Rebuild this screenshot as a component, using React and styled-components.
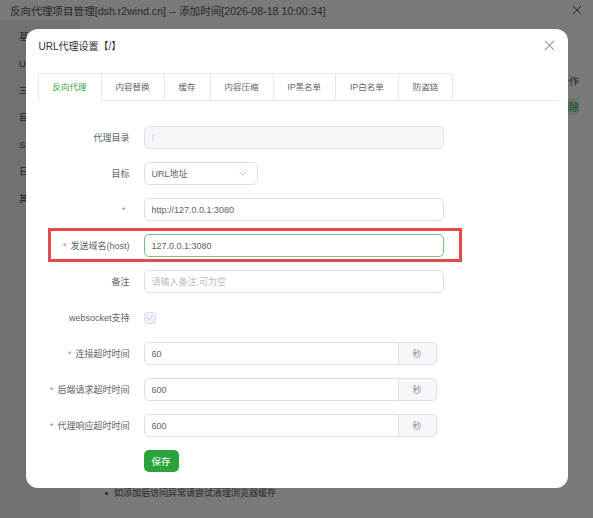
import React from "react";
import styled, { createGlobalStyle } from "styled-components";

const GlobalStyle = createGlobalStyle`
  html, body {
    margin: 0;
    padding: 0;
  }
  body {
    font-family: "Liberation Sans", "Noto Sans CJK SC", sans-serif;
    background: #fff;
  }
  * {
    box-sizing: border-box;
  }
`;

// ---- page behind the dialog ----

const Page = styled.div`
  position: relative;
  width: 593px;
  height: 518px;
  overflow: hidden;
  background: #fff;
  display: flex;
  flex-direction: column;
`;

const PageHeader = styled.div`
  display: flex;
  align-items: center;
  justify-content: space-between;
  height: 20px;
  padding: 0 11px 0 10px;
  font-size: 10.6px;
  color: #555;
`;

const PageBody = styled.div`
  flex: 1;
  display: grid;
  grid-template-columns: 80px 1fr;
`;

const SideNav = styled.div`
  background: #ececec;
  padding-top: 3px;
`;

const NavItem = styled.div`
  height: 27px;
  line-height: 27px;
  padding-left: 19px;
  font-size: 9.5px;
  color: #444;
  white-space: nowrap;
`;

const Content = styled.div`
  display: flex;
  flex-direction: column;
  padding: 48px 0 0 20px;
`;

const TableRow = styled.div`
  display: grid;
  grid-template-columns: 1fr 34px;
  align-items: center;
  height: ${(p) => p.height || "24px"};
  font-size: 10px;
  color: #555;
`;

const DangerLink = styled.span`
  justify-self: start;
  padding: 1px 0;
  border-radius: 3px;
  background: #dff3e2;
  color: #2ba33c;
  white-space: nowrap;
`;

const Tip = styled.div`
  margin-top: auto;
  display: flex;
  align-items: center;
  gap: 6px;
  padding: 0 0 18px 5px;
  line-height: 14px;
  font-size: 9px;
  color: #555;
`;

const Dot = styled.span`
  width: 3px;
  height: 3px;
  border-radius: 50%;
  background: #555;
`;

// ---- dialog ----

const Mask = styled.div`
  position: absolute;
  inset: 0;
  background: rgba(0, 0, 0, 0.52);
  display: flex;
  justify-content: center;
  align-items: flex-start;
  padding-top: 29px;
`;

const Modal = styled.div`
  width: 542px;
  background: #fff;
  border-radius: 12px;
`;

const ModalHeader = styled.div`
  display: flex;
  align-items: center;
  justify-content: space-between;
  height: 32px;
  padding: 0 13px;
  font-size: 10px;
  color: #303133;
`;

const ModalBody = styled.div`
  padding: 12px 10px 16px 12px;
`;

const TabList = styled.div`
  display: flex;
  border-bottom: 1px solid #e4e7ed;
`;

const TabGroup = styled.div`
  display: flex;
  border: 1px solid #e4e7ed;
  border-bottom: none;
  border-radius: 4px 4px 0 0;
  margin-bottom: -1px;
`;

const Tab = styled.div`
  height: 27px;
  line-height: 26px;
  padding: 0 14px;
  font-size: 8.5px;
  white-space: nowrap;
  color: ${(p) => (p.active ? "#2ba33c" : "#606266")};
  border-left: ${(p) => (p.first ? "none" : "1px solid #e4e7ed")};
  border-bottom: 1px solid ${(p) => (p.active ? "#fff" : "#e4e7ed")};
`;

const Form = styled.div`
  margin-top: 25px;
`;

const Row = styled.div`
  position: relative;
  display: flex;
  align-items: center;
  height: 23px;
  margin-bottom: 13px;
`;

const Highlight = styled.div`
  position: absolute;
  left: 10px;
  right: 96px;
  top: -6px;
  bottom: -5px;
  border: 3px solid #e5484d;
  pointer-events: none;
`;

const Label = styled.label`
  width: 106px;
  padding-right: 14px;
  text-align: right;
  font-size: 9px;
  color: #606266;
  white-space: nowrap;
`;

const Star = styled.span`
  color: #f56c6c;
  margin-right: 4px;
`;

const Input = styled.input`
  width: ${(p) => p.width || "300px"};
  height: 23px;
  padding: 0 7px;
  border: 1px solid ${(p) => (p.focused ? "#72c27f" : "#dcdfe6")};
  border-radius: ${(p) => (p.grouped ? "5px 0 0 5px" : "5px")};
  background: ${(p) => (p.disabled ? "#f5f7fa" : "#fff")};
  font-family: inherit;
  font-size: 9px;
  color: ${(p) => (p.disabled ? "#c0c4cc" : "#606266")};
  outline: none;

  &::placeholder {
    color: #b8bcc4;
  }
`;

const Select = styled.div`
  width: 114px;
  height: 23px;
  display: flex;
  align-items: center;
  justify-content: space-between;
  padding: 0 10px 0 7px;
  border: 1px solid #dcdfe6;
  border-radius: 5px;
  font-size: 9px;
  color: #606266;
`;

const InputGroup = styled.div`
  display: flex;
  width: 293px;
`;

const Append = styled.div`
  width: 38px;
  height: 23px;
  display: flex;
  align-items: center;
  justify-content: center;
  background: #f5f7fa;
  border: 1px solid #dcdfe6;
  border-left: none;
  border-radius: 0 5px 5px 0;
  font-size: 9px;
  color: #909399;
`;

const Checkbox = styled.span`
  width: 12px;
  height: 12px;
  display: flex;
  align-items: center;
  justify-content: center;
  border: 1px solid #dcdfe6;
  border-radius: 3px;
  background: #edf2fc;
`;

const SaveButton = styled.button`
  margin-left: 106px;
  width: 35px;
  height: 22px;
  border: none;
  border-radius: 5px;
  background: #2ba33c;
  color: #fff;
  font-family: inherit;
  font-size: 9.5px;
  padding: 0;
`;

const CloseIcon = ({ size = 11, color = "#909399" }) => (
  <svg width={size} height={size} viewBox="0 0 12 12">
    <path d="M1 1L11 11M11 1L1 11" stroke={color} strokeWidth="1.1" fill="none" />
  </svg>
);

const Chevron = () => (
  <svg width="8" height="5" viewBox="0 0 8 5">
    <path d="M0.5 0.5L4 4L7.5 0.5" stroke="#c0c4cc" strokeWidth="0.9" fill="none" />
  </svg>
);

const Check = () => (
  <svg width="8" height="7" viewBox="0 0 8 7">
    <path d="M1 3.6L3.1 5.6L7 1.2" stroke="#c0c4cc" strokeWidth="1" fill="none" />
  </svg>
);

const tabs = ["反向代理", "内容替换", "缓存", "内容压缩", "IP黑名单", "IP白名单", "防盗链"];
const navItems = ["基本", "URL", "三级", "目录", "SSL", "日志", "其他"];

const timeouts = [
  { label: "连接超时时间", value: "60" },
  { label: "后端请求超时时间", value: "600" },
  { label: "代理响应超时时间", value: "600" },
];

export default function App() {
  return (
    <>
      <GlobalStyle />
      <Page>
        <PageHeader>
          <span>反向代理项目管理[dsh.r2wind.cn] -- 添加时间[2026-08-18 10:00:34]</span>
          <CloseIcon size={10} color="#444" />
        </PageHeader>
        <PageBody>
          <SideNav>
            {navItems.map((n) => (
              <NavItem key={n}>{n}</NavItem>
            ))}
          </SideNav>
          <Content>
            <TableRow>
              <span>URL</span>
              <span>操作</span>
            </TableRow>
            <TableRow height="28px">
              <span>/</span>
              <DangerLink>删除</DangerLink>
            </TableRow>
            <Tip>
              <Dot />
              如添加后访问异常请尝试清理浏览器缓存
            </Tip>
          </Content>
        </PageBody>

        <Mask>
          <Modal>
            <ModalHeader>
              <span>URL代理设置【/】</span>
              <CloseIcon />
            </ModalHeader>
            <ModalBody>
              <TabList>
                <TabGroup>
                  {tabs.map((t, i) => (
                    <Tab key={t} first={i === 0} active={i === 0}>
                      {t}
                    </Tab>
                  ))}
                </TabGroup>
              </TabList>

              <Form>
                <Row>
                  <Label>代理目录</Label>
                  <Input disabled defaultValue="/" />
                </Row>
                <Row>
                  <Label>目标</Label>
                  <Select>
                    <span>URL地址</span>
                    <Chevron />
                  </Select>
                </Row>
                <Row>
                  <Label>
                    <Star>*</Star>
                  </Label>
                  <Input defaultValue="http://127.0.0.1:3080" />
                </Row>
                <Row>
                  <Label>
                    <Star>*</Star>发送域名(host)
                  </Label>
                  <Input focused defaultValue="127.0.0.1:3080" />
                  <Highlight />
                </Row>
                <Row>
                  <Label>备注</Label>
                  <Input placeholder="请输入备注,可为空" />
                </Row>
                <Row>
                  <Label>websocket支持</Label>
                  <Checkbox>
                    <Check />
                  </Checkbox>
                </Row>
                {timeouts.map((t) => (
                  <Row key={t.label}>
                    <Label>
                      <Star>*</Star>
                      {t.label}
                    </Label>
                    <InputGroup>
                      <Input grouped width="255px" defaultValue={t.value} />
                      <Append>秒</Append>
                    </InputGroup>
                  </Row>
                ))}
                <SaveButton>保存</SaveButton>
              </Form>
            </ModalBody>
          </Modal>
        </Mask>
      </Page>
    </>
  );
}
